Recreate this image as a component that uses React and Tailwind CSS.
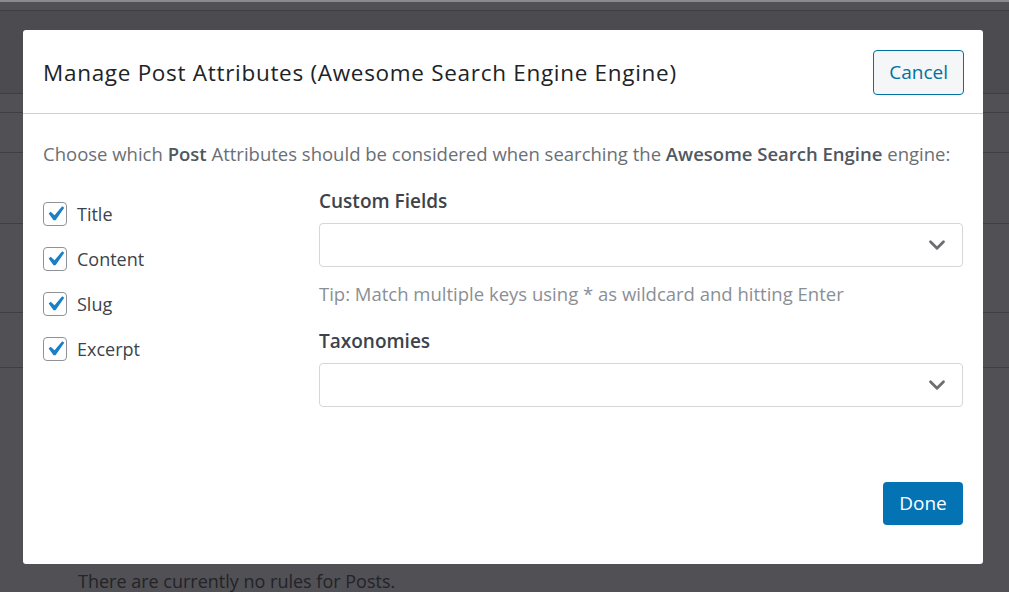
import { ChevronDown } from "lucide-react";

const attributes = ["Title", "Content", "Slug", "Excerpt"];

function SelectBox() {
    return (
        <div className="flex h-[44px] items-center justify-end rounded-[4px] border border-[#d6d6d9] bg-white pr-[12px]">
            <ChevronDown className="h-[26px] w-[26px] text-[#6e6e72]" strokeWidth={2.6} />
        </div>
    );
}

function CheckMark() {
    return (
        <svg viewBox="0 0 20 20" className="h-[30px] w-[30px] shrink-0 overflow-visible" fill="#1a7fc5">
            <path d="M14.83 4.89l1.34.94-5.81 8.38H9.02L5.78 9.67l1.34-1.25 2.57 2.4z" />
        </svg>
    );
}

export default function App() {
    return (
        <div className="relative h-[592px] w-full overflow-hidden bg-[#505055] font-['Open_Sans',sans-serif]">
            {/* page behind the overlay */}
            <div className="flex flex-col border-t-2 border-[#8a8a8e]">
                <div className="h-[9px] border-b border-[#3e3e43]" />
                <div className="h-[83px] border-b border-[#3e3e43] bg-[#4b4b50]" />
                <div className="h-[19px] border-b border-[#3e3e43]" />
                <div className="h-[40px] border-b border-[#3e3e43]" />
                <div className="h-[71px] border-b border-[#3e3e43]" />
                <div className="h-[89px] border-b border-[#3e3e43]" />
                <div className="h-[55px] border-b border-[#3e3e43]" />
                <div className="h-[200px]" />
                <p className="pl-[78px] text-[18px] text-[#232328]">There are currently no rules for Posts.</p>
            </div>

            {/* modal */}
            <div className="absolute left-[23px] top-[30px] flex h-[534px] w-[960px] flex-col rounded-[3px] bg-white">
                <div className="flex h-[84px] items-center justify-between border-b border-[#c9d0d6] pl-[20px] pr-[19px]">
                    <h2 className="mt-[3px] text-[22.5px] tracking-[0.7px] text-[#1d2327]">Manage Post Attributes (Awesome Search Engine Engine)</h2>
                    <button className="mt-[2px] h-[45px] rounded-[4px] border border-[#0071a1] bg-[#f5f6f7] px-[15px] text-[19px] text-[#0071a1]">
                        Cancel
                    </button>
                </div>

                <div className="flex flex-1 flex-col px-[20px] pt-[26px]">
                    <p className="text-[18.5px] leading-[28px] text-[#6a6f75]">
                        Choose which <strong className="font-semibold text-[#50575e]">Post</strong> Attributes should be considered when searching the{" "}
                        <strong className="font-semibold text-[#50575e]">Awesome Search Engine</strong> engine:
                    </p>

                    <div className="mt-[19px] flex">
                        <div className="flex w-[276px] flex-col gap-[21px] pt-[15px]">
                            {attributes.map((name) => (
                                <label key={name} className="flex h-[24px] items-center gap-[10px]">
                                    <span className="flex h-[24px] w-[24px] items-center justify-center rounded-[4px] border border-[#8f9296] bg-white">
                                        <CheckMark />
                                    </span>
                                    <span className="text-[18px] text-[#3c434a]">{name}</span>
                                </label>
                            ))}
                        </div>

                        <div className="flex flex-1 flex-col">
                            <h3 className="mt-[1px] text-[19px] leading-[26px] font-semibold text-[#3c434a]">Custom Fields</h3>
                            <div className="mt-[9px]">
                                <SelectBox />
                            </div>
                            <p className="mt-[14px] text-[18.5px] leading-[26px] text-[#8a8f95]">Tip: Match multiple keys using * as wildcard and hitting Enter</p>

                            <h3 className="mt-[21px] text-[19px] leading-[26px] font-semibold text-[#3c434a]">Taxonomies</h3>
                            <div className="mt-[9px]">
                                <SelectBox />
                            </div>
                        </div>
                    </div>

                    <div className="mt-auto flex justify-end pb-[39px]">
                        <button className="h-[43px] w-[80px] rounded-[4px] bg-[#0473b3] text-[19px] text-white">Done</button>
                    </div>
                </div>
            </div>
        </div>
    );
}
